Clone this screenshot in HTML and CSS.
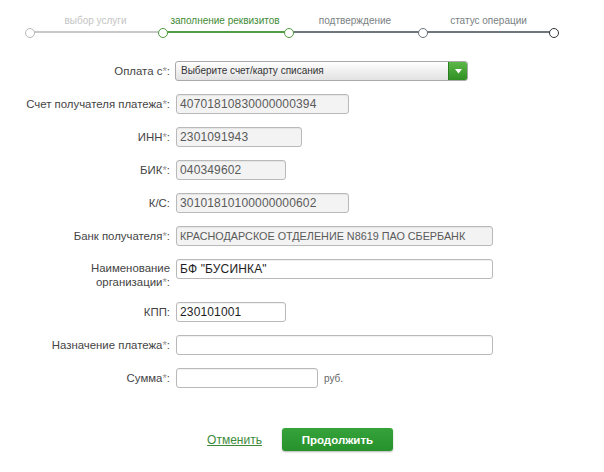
FILE: index.html
```html
<!DOCTYPE html>
<html lang="ru">
<head>
<meta charset="utf-8">
<link rel="stylesheet" href="styles.css">
</head>
<body>
<div class="page">
  <div class="steps">
    <div class="step done w1"><span class="step-label">выбор услуги</span><div class="step-line"></div></div>
    <div class="step current w2"><span class="step-label">заполнение реквизитов</span><div class="step-line"></div></div>
    <div class="step todo w3"><span class="step-label">подтверждение</span><div class="step-line"></div></div>
    <div class="step todo last w4"><span class="step-label">статус операции</span><div class="step-line"></div></div>
  </div>

  <form class="form">
    <div class="row">
      <label class="label">Оплата с<span class="req">*</span>:</label>
      <div class="select">
        <span class="select-text">Выберите счет/карту списания</span>
        <span class="select-btn"><svg width="7" height="5" viewBox="0 0 7 5"><path d="M0 0H7L3.5 4.5Z" fill="#fff"/></svg></span>
      </div>
    </div>
    <div class="row">
      <label class="label">Счет получателя платежа<span class="req">*</span>:</label>
      <div class="input disabled w-long">40701810830000000394</div>
    </div>
    <div class="row">
      <label class="label">ИНН<span class="req">*</span>:</label>
      <div class="input disabled w-mid">2301091943</div>
    </div>
    <div class="row">
      <label class="label">БИК<span class="req">*</span>:</label>
      <div class="input disabled w-short">040349602</div>
    </div>
    <div class="row">
      <label class="label">К/С:</label>
      <div class="input disabled w-long">30101810100000000602</div>
    </div>
    <div class="row">
      <label class="label">Банк получателя<span class="req">*</span>:</label>
      <div class="input disabled w-full caps">КРАСНОДАРСКОЕ ОТДЕЛЕНИЕ N8619 ПАО СБЕРБАНК</div>
    </div>
    <div class="row row-two">
      <label class="label two">Наименование<br>организации<span class="req">*</span>:</label>
      <div class="input w-full">БФ "БУСИНКА"</div>
    </div>
    <div class="row">
      <label class="label">КПП:</label>
      <div class="input w-short">230101001</div>
    </div>
    <div class="row">
      <label class="label">Назначение платежа<span class="req">*</span>:</label>
      <div class="input w-full"></div>
    </div>
    <div class="row row-sum">
      <label class="label">Сумма<span class="req">*</span>:</label>
      <div class="input w-sum"></div>
      <span class="unit">руб.</span>
    </div>

    <div class="actions">
      <a class="cancel" href="#">Отменить</a>
      <button class="submit" type="button">Продолжить</button>
    </div>
  </form>
</div>
</body>
</html>
```

FILE: styles.css
```css
* { box-sizing: border-box; }

body {
  margin: 0;
  background: #fff;
  font-family: Arial, "Liberation Sans", sans-serif;
  color: #333;
}

.page {
  width: 604px;
  height: 472px;
  overflow: hidden;
}

/* progress steps */
.steps {
  display: flex;
  padding: 14px 0 0 29px;
}

.step {
  position: relative;
  display: flex;
  flex-direction: column;
  align-items: center;
}

.w1 { width: 133px; }
.w2 { width: 126px; }
.w3 { width: 134px; }
.w4 { width: 133px; }

.step-label {
  font-size: 10px;
  line-height: 14px;
  white-space: nowrap;
}

.step-line {
  width: 100%;
  height: 2px;
  margin-top: 3px;
}

.step::before,
.step.last::after {
  content: "";
  position: absolute;
  top: 14px;
  width: 8px;
  height: 8px;
  border-radius: 50%;
  background: #fff;
  border: 1.5px solid;
  z-index: 1;
}

.step::before { left: -4px; }
.step.last::after { right: -4px; }

.done .step-label { color: #c4c4c4; }
.done .step-line { background: #c8c8c8; }
.done::before { border-color: #b9b9b9; }

.current .step-label { color: #3f8a36; }
.current .step-line { background: #519c45; }
.current::before { border-color: #4e9a40; }

.todo .step-label { color: #7a7f83; }
.todo .step-line { background: #6f777c; }
.w3::before { border-color: #4e9a40; }
.w4::before, .w4::after { border-color: #6a7277; }

/* form */
.form {
  margin-top: 28px;
  display: flex;
  flex-direction: column;
  gap: 13px;
}

.row {
  display: flex;
  align-items: center;
}

.row-two { align-items: flex-start; }

.label {
  width: 170px;
  flex: none;
  text-align: right;
  margin-right: 6px;
  font-size: 11.4px;
  line-height: 14px;
  color: #444;
}

.label.two { padding-top: 2px; }

.req { color: #999; }

.input {
  height: 20px;
  border: 1px solid #b9b9b9;
  border-radius: 3px;
  background: #fff;
  box-shadow: inset 0 1px 1px rgba(0,0,0,0.06);
  padding: 0 3px;
  font-size: 12px;
  line-height: 18px;
  letter-spacing: 0.15px;
  color: #1e1e1e;
  white-space: nowrap;
  overflow: hidden;
}

.input.disabled {
  background: #f3f3f3;
  color: #5a5a5a;
}

.input.caps {
  font-size: 10.8px;
  letter-spacing: 0;
}

.w-long { width: 173px; }
.w-mid { width: 126px; }
.w-short { width: 110px; }
.w-full { width: 317px; }
.w-sum { width: 142px; }

.unit {
  margin-left: 6px;
  font-size: 10px;
  color: #666;
}

.select {
  margin-left: -1px;
  width: 293px;
  height: 20px;
  display: flex;
  border: 1px solid #a9a9a9;
  border-radius: 3px;
  overflow: hidden;
  background: linear-gradient(#ffffff, #ededed 60%, #e2e2e2);
}

.select-text {
  flex: 1;
  padding-left: 5px;
  font-size: 10px;
  line-height: 18px;
  color: #333;
}

.select-btn {
  width: 19px;
  display: flex;
  align-items: center;
  justify-content: center;
  background: linear-gradient(#5cb848, #2f8f22);
  border-left: 1px solid #2d7d22;
}

/* actions */
.actions {
  margin-top: 27px;
  display: flex;
  justify-content: center;
  align-items: center;
  gap: 20px;
  padding-right: 4px;
}

.cancel {
  font-size: 12px;
  color: #3d8b3a;
  text-decoration: underline;
}

.submit {
  width: 111px;
  height: 23px;
  border: none;
  border-radius: 3px;
  background: linear-gradient(#36a23a, #27922c);
  box-shadow: 0 1px 2px rgba(0,0,0,0.3);
  color: #fff;
  font-family: Arial, "Liberation Sans", sans-serif;
  font-size: 11.5px;
  font-weight: bold;
  padding: 0;
}
```
